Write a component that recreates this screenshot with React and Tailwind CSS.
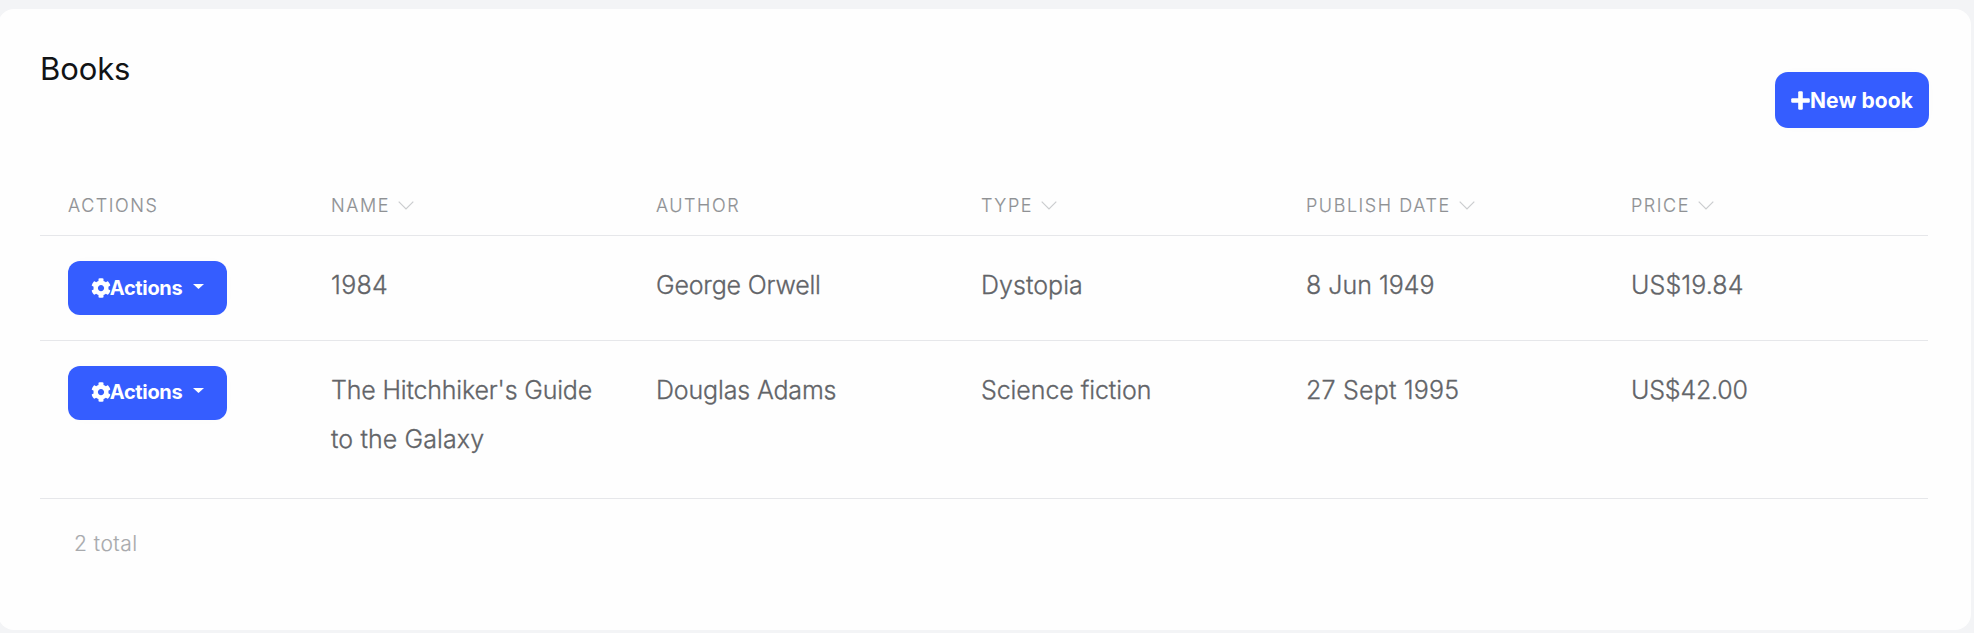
import React from "react";
import { FaCog } from "react-icons/fa";

const columns = [
  { title: "ACTIONS", sortable: false },
  { title: "NAME", sortable: true },
  { title: "AUTHOR", sortable: false },
  { title: "TYPE", sortable: true },
  { title: "PUBLISH DATE", sortable: true },
  { title: "PRICE", sortable: true },
];

const books = [
  [
    ["1984", "tracking-[0.3px]"],
    ["George Orwell", "tracking-[-0.2px]"],
    ["Dystopia", "tracking-[0.05px]"],
    ["8 Jun 1949", "tracking-normal"],
    ["US$19.84", "tracking-[0.1px]"],
  ],
  [
    [<>The Hitchhiker's Guide <span className="tracking-[0.1px]">to the Galaxy</span></>, "tracking-[-0.18px]"],
    ["Douglas Adams", "tracking-[-0.15px]"],
    ["Science fiction", "tracking-[-0.08px]"],
    ["27 Sept 1995", "tracking-[0.2px]"],
    ["US$42.00", "tracking-[-0.2px]"],
  ],
];

function SortIcon() {
  return (
    <svg className="ml-2 h-[9px] w-4" viewBox="0 0 16 9" fill="none" stroke="#cbcdcf" strokeWidth="1.2">
      <path d="M0.7 0.7 8 8 15.3 0.7" />
    </svg>
  );
}

function ActionsButton({ raised }) {
  return (
    <button
      className={`flex h-[54px] w-[159px] items-center rounded-xl bg-[#355dff] pl-[22.5px] text-[20px] font-bold tracking-[-0.35px] text-white shadow-[0_0_20px_rgba(0,0,0,0.01)] ${raised ? "pb-0.5" : ""}`}
    >
      <FaCog className="size-5 shrink-0" />
      <span className="-ml-[0.7px]">Actions</span>
      <svg className="mb-[3px] ml-[10.5px] h-[5px] w-[11px]" viewBox="0 0 11 5" fill="white">
        <path d="M0 0h11L5.5 5z" />
      </svg>
    </button>
  );
}

export default function App() {
  return (
    <div className="h-[633px] overflow-hidden bg-[#f3f4f6] pt-[9px] font-['Inter',sans-serif]">
      <main className="-ml-0.5 h-[621px] w-[1973px] rounded-[16px] bg-[#fefefe] pl-[42px] pr-[43px]">
        <header className="flex h-[164px] items-start justify-between">
          <h1 className="pt-[38px] text-[31px] leading-[44px] font-normal tracking-[-0.1px] text-[#111315]">Books</h1>
          <button className="mt-[63px] -mr-px flex h-14 w-[154px] items-center rounded-[13px] bg-[#355dff] pl-4 text-[21px] font-bold text-white shadow-[0_0_20px_rgba(0,0,0,0.01)]">
            <svg className="size-[19px] shrink-0" viewBox="0 0 19 19" fill="white">
              <rect x="7.2" y="0.2" width="4.6" height="18.6" rx="1.2" />
              <rect x="0.2" y="7.2" width="18.6" height="4.6" rx="1.2" />
            </svg>
            <span className="pt-0.5 tracking-[0.1px] whitespace-nowrap">New book</span>
          </button>
        </header>
        <div className="grid h-[63px] grid-cols-[263px_repeat(5,325px)] border-b border-[#e6e7ea]">
          {columns.map((c) => (
            <div
              key={c.title}
              className="flex h-[65px] items-center pl-7 text-[18px] font-light tracking-[1.55px] text-[#8f9194] [-webkit-text-stroke:0.15px_#8f9194]"
            >
              <span>{c.title}</span>
              {c.sortable && <SortIcon />}
            </div>
          ))}
        </div>
        {books.map((cells, i) => (
          <div
            key={i}
            className={`grid grid-cols-[263px_repeat(5,325px)] border-b border-[#e6e7ea] pt-[25px] ${i === 0 ? "h-[105px]" : "h-[158px]"}`}
          >
            <div className="pl-7">
              <ActionsButton raised={i > 0} />
            </div>
            {cells.map(([text, tracking], j) => (
              <div
                key={j}
                className={`px-7 text-[25px] leading-[49px] font-light text-[#626468] [-webkit-text-stroke:0.3px_#626468] ${tracking}`}
              >
                {text}
              </div>
            ))}
          </div>
        ))}
        <footer className="pt-[29px] pl-[34px] text-[21px] leading-8 font-light tracking-[0.5px] text-[#a8aaad] [-webkit-text-stroke:0.15px_#a8aaad]">
          2 total
        </footer>
      </main>
    </div>
  );
}
